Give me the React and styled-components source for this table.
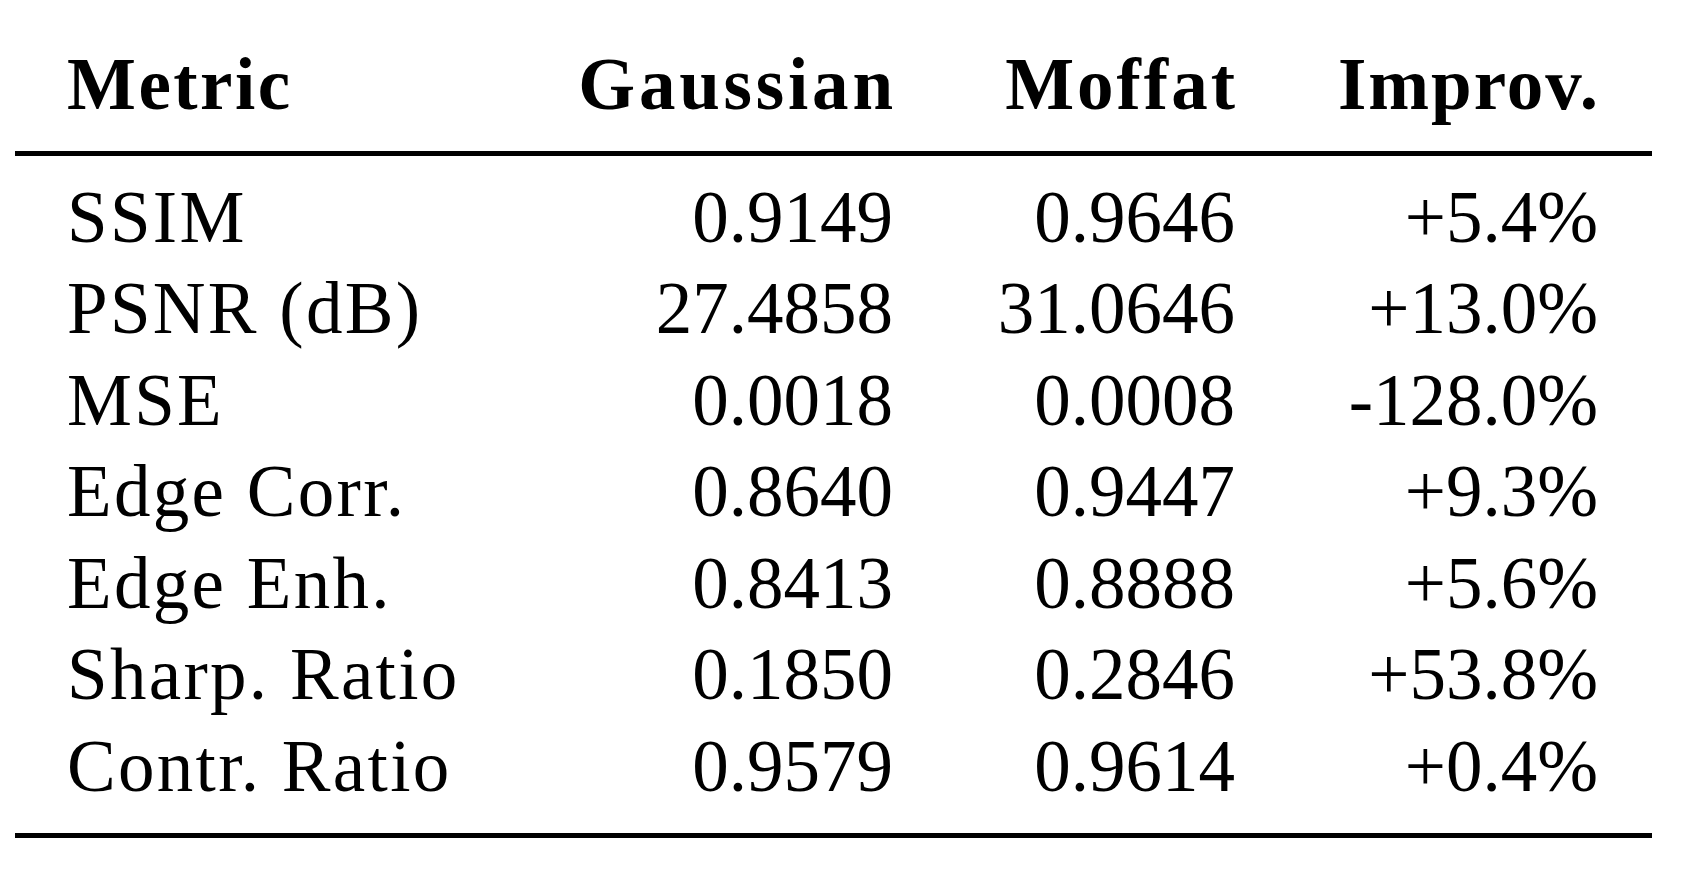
import React from 'react'
import styled, { createGlobalStyle } from 'styled-components'

const GlobalStyle = createGlobalStyle`
  html, body {
    margin: 0;
    padding: 0;
    background: #fff;
  }
  body {
    font-family: 'Liberation Serif', 'Times New Roman', serif;
    color: #000;
  }
`

const Page = styled.div`
  padding: 39px 0 0 15px;
`

const Table = styled.div`
  width: 1637px;
`

const Row = styled.div`
  display: grid;
  grid-template-columns: 480px 346px 342px 363px;
  padding: 0 54px 0 52px;
  font-size: 73px;
  line-height: 91.5px;
  font-weight: ${p => (p.$head ? 700 : 400)};
`

const Body = styled.div`
  padding: 16px 0 21px;
`

const Rule = styled.div`
  height: 5px;
  background: #000;
  margin-top: ${p => p.$top || 0}px;
`

const Label = styled.div`
  text-align: left;
  letter-spacing: ${p => (p.$head ? 2.5 : 2.3)}px;
  white-space: nowrap;
`

// headers get a little tracking to stand in for the wider book face
const Num = styled.div`
  text-align: right;
  white-space: nowrap;
  letter-spacing: ${p => p.$ls || 0}px;
  margin-right: ${p => -(p.$ls || 0)}px;
`

const rows = [
  ['SSIM', '0.9149', '0.9646', '+5.4%'],
  ['PSNR (dB)', '27.4858', '31.0646', '+13.0%'],
  ['MSE', '0.0018', '0.0008', '-128.0%'],
  ['Edge Corr.', '0.8640', '0.9447', '+9.3%'],
  ['Edge Enh.', '0.8413', '0.8888', '+5.6%'],
  ['Sharp. Ratio', '0.1850', '0.2846', '+53.8%'],
  ['Contr. Ratio', '0.9579', '0.9614', '+0.4%'],
]

export default function App() {
  return (
    <>
      <GlobalStyle />
      <Page>
        <Table>
          <Row $head>
            <Label $head>Metric</Label>
            <Num $ls={3.8}>Gaussian</Num>
            <Num $ls={3}>Moffat</Num>
            <Num $ls={2}>Improv.</Num>
          </Row>
          <Rule $top={20} />
          <Body>
            {rows.map(r => (
              <Row key={r[0]}>
                <Label>{r[0]}</Label>
                <Num>{r[1]}</Num>
                <Num>{r[2]}</Num>
                <Num>{r[3]}</Num>
              </Row>
            ))}
          </Body>
          <Rule />
        </Table>
      </Page>
    </>
  )
}
